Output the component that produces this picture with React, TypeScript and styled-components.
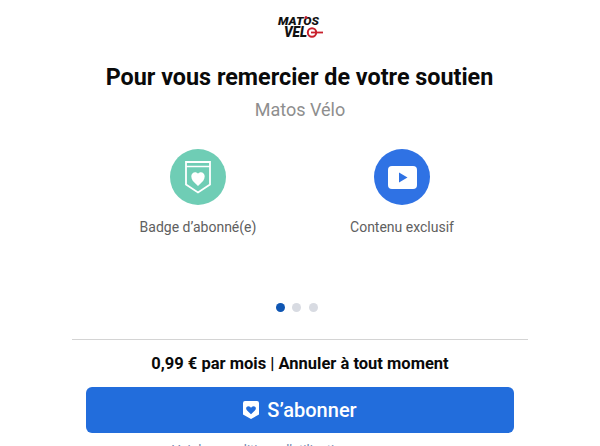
import React from 'react';
import styled, { createGlobalStyle } from 'styled-components';

const GlobalStyle = createGlobalStyle`
  html, body {
    margin: 0;
    padding: 0;
    background: #fff;
    overflow: hidden;
  }
`;

const perks = [
  { label: 'Badge d’abonné(e)', kind: 'badge' },
  { label: 'Contenu exclusif', kind: 'video' },
];

const BadgeIcon = () => (
  <svg width="26" height="33" viewBox="0 0 26 33" fill="none">
    <path d="M1 1h24v22.500L13 31.500 1 23.500z" stroke="#fff" strokeWidth="1.800" />
    <path d="M1 5.500h24" stroke="#fff" strokeWidth="1.500" />
    <path
      d="M13 25l-1.300-1.200C8.300 20.700 6.300 18.800 6.300 15.300c0-2.300 1.700-4 3.800-4 1.200 0 2.200.5 2.900 1.500.7-1 1.700-1.500 2.900-1.500 2.100 0 3.800 1.700 3.800 4 0 3.500-2 5.400-5.400 8.500z"
      fill="#fff"
    />
  </svg>
);

const VideoIcon = () => (
  <svg width="29" height="23" viewBox="0 0 29 23">
    <rect width="29" height="23" rx="4" fill="#fff" />
    <path d="M11 6.500v10l8.500-5z" fill="#2f72e4" />
  </svg>
);

const ButtonShield = () => (
  <svg width="16" height="18" viewBox="0 0 16 18">
    <path
      fillRule="evenodd"
      d="M2 0h12a2 2 0 0 1 2 2v11.500L8 18 0 13.500V2a2 2 0 0 1 2-2zm6 13.200 3.900-3.700c1-1 1.300-2.400.5-3.500-.8-1-2.400-1.200-3.400-.3L8 6.700l-1-1c-1-.9-2.600-.7-3.400.3-.8 1.100-.5 2.500.5 3.500z"
      fill="#fff"
    />
  </svg>
);

// Two-line wordmark, the O of the second line is the red ring with its tail
const Logo = () => (
  <LogoMark width="50" height="26" viewBox="0 0 50 26">
    <LogoText x="2" y="10" fontSize="11.500" textLength="41" lengthAdjust="spacingAndGlyphs">
      MATOS
    </LogoText>
    <circle cx="30" cy="2.500" r="1.500" fill="#c8202c" />
    <LogoText x="8" y="22" fontSize="15.500" textLength="23" lengthAdjust="spacingAndGlyphs">
      VEL
    </LogoText>
    <circle cx="36" cy="17.500" r="4.200" fill="none" stroke="#c8202c" strokeWidth="2" />
    <path d="M35 17.500h12" stroke="#c8202c" strokeWidth="1.800" />
  </LogoMark>
);

export default function App() {
  return (
    <>
      <GlobalStyle />
      <Page>
        <Logo />
        <Title>Pour vous remercier de votre soutien</Title>
        <Channel>Matos Vélo</Channel>
        <Perks>
          {perks.map((perk) => (
            <Perk key={perk.label}>
              <PerkCircle $kind={perk.kind}>
                {perk.kind === 'badge' ? <BadgeIcon /> : <VideoIcon />}
              </PerkCircle>
              <PerkLabel>{perk.label}</PerkLabel>
            </Perk>
          ))}
        </Perks>
        <Dots>
          <Dot $active />
          <Dot />
          <Dot />
        </Dots>
        <Divider />
        <Price>0,99 € par mois | Annuler à tout moment</Price>
        <SubscribeButton>
          <ButtonShield />
          S’abonner
        </SubscribeButton>
        <TermsNote>Voir les conditions d’utilisation</TermsNote>
      </Page>
    </>
  );
}

const Page = styled.div`
  width: 600px;
  height: 446px;
  overflow: hidden;
  display: flex;
  flex-direction: column;
  align-items: center;
  font-family: Roboto, 'Liberation Sans', sans-serif;
`;

const LogoMark = styled.svg`
  flex-shrink: 0;
  margin-top: 15px;
  margin-left: 2px;
`;

const LogoText = styled.text`
  font-family: Roboto, sans-serif;
  font-style: italic;
  font-weight: 900;
  fill: #111;
`;

const Title = styled.h1`
  margin: 22px 0 0;
  padding-right: 1px;
  font-size: 23.350px;
  line-height: 28px;
  font-weight: 700;
  color: #0a0a0a;
`;

const Channel = styled.div`
  margin-top: 7px;
  font-size: 18px;
  line-height: 24px;
  color: #8e8e8e;
`;

const Perks = styled.div`
  display: flex;
  justify-content: center;
  gap: 54px;
  margin-top: 27px;
`;

const Perk = styled.div`
  width: 150px;
  display: flex;
  flex-direction: column;
  align-items: center;
`;

const PerkCircle = styled.div<{ $kind: string }>`
  width: 56px;
  height: 56px;
  border-radius: 50%;
  display: flex;
  align-items: center;
  justify-content: center;
  background: ${({ $kind }) => ($kind === 'badge' ? '#6fcdb5' : '#2f72e4')};
`;

const PerkLabel = styled.div`
  margin-top: 12px;
  font-size: 14px;
  line-height: 20px;
  white-space: nowrap;
  color: #606060;
`;

const Dots = styled.div`
  display: flex;
  gap: 7.500px;
  margin-top: 66px;
  padding-right: 7px;
`;

const Dot = styled.span<{ $active?: boolean }>`
  width: 9px;
  height: 9px;
  border-radius: 50%;
  background: ${({ $active }) => ($active ? '#0f56b3' : '#d8dbe2')};
`;

const Divider = styled.div`
  width: 456px;
  height: 1px;
  flex-shrink: 0;
  margin-top: 27px;
  background: #d4d4d4;
`;

const Price = styled.div`
  margin-top: 14px;
  font-size: 16.500px;
  line-height: 20px;
  font-weight: 700;
  color: #0a0a0a;
`;

const SubscribeButton = styled.button`
  width: 428px;
  height: 46px;
  margin-top: 13px;
  flex-shrink: 0;
  border: none;
  border-radius: 6px;
  display: flex;
  align-items: center;
  justify-content: center;
  gap: 8px;
  background: #226ddc;
  color: #fff;
  font-family: inherit;
  font-size: 20px;
  font-weight: 500;
`;

const TermsNote = styled.div`
  flex-shrink: 0;
  align-self: flex-start;
  margin: 9px 0 0 172px;
  font-size: 13px;
  line-height: 15px;
  white-space: nowrap;
  color: #6f86ad;
`;
